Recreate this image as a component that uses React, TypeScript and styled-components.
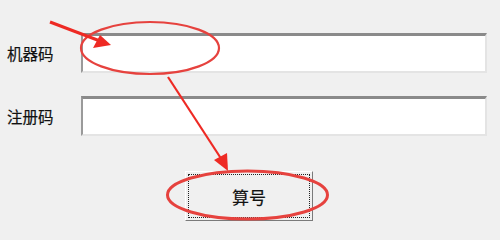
import React from "react";
import styled, { createGlobalStyle } from "styled-components";

const GlobalStyle = createGlobalStyle`
  html, body {
    margin: 0;
    padding: 0;
    background: #f0f0f0;
  }
`;

const Page = styled.div`
  position: relative;
  width: 500px;
  height: 223px;
  overflow: hidden;
  background: #f0f0f0;
  font-family: "Noto Sans CJK SC", "Liberation Sans", sans-serif;
`;

const Form = styled.div`
  display: flex;
  flex-direction: column;
  padding: 33px 0 0 7px;
  gap: 23px;
`;

const Row = styled.div`
  display: flex;
  align-items: center;
`;

const Label = styled.span`
  width: 74px;
  font-size: 15.5px;
  color: #111;
  -webkit-text-stroke: 0.2px #111;
`;

const Field = styled.div`
  box-sizing: border-box;
  width: 406px;
  height: 40px;
  background: #fff;
  border-top: 3px solid #8a8a8a;
  border-left: 2px solid #9a9a9a;
  border-right: 2px solid #e4e4e4;
  border-bottom: 2px solid #e4e4e4;
`;

const ButtonRow = styled.div`
  display: flex;
  padding-left: 185px;
  margin-top: 35px;
`;

const Button = styled.div`
  box-sizing: border-box;
  width: 128px;
  height: 50px;
  display: flex;
  align-items: center;
  justify-content: center;
  background: #f0f0f0;
  border: 1px solid #fff;
  border-right-color: #7a7a7a;
  border-bottom-color: #7a7a7a;
  padding: 2px;
`;

const Focus = styled.div`
  box-sizing: border-box;
  width: 100%;
  height: 100%;
  border: 1px dotted #222;
  display: flex;
  align-items: center;
  justify-content: center;
  font-size: 17px;
  color: #111;
  -webkit-text-stroke: 0.2px #111;
`;

const Marks = styled.svg`
  position: absolute;
  left: 0;
  top: 0;
  pointer-events: none;
`;

export default function App() {
  return (
    <Page>
      <GlobalStyle />
      <Form>
        <Row>
          <Label>机器码</Label>
          <Field />
        </Row>
        <Row>
          <Label>注册码</Label>
          <Field />
        </Row>
      </Form>
      <ButtonRow>
        <Button>
          <Focus>算号</Focus>
        </Button>
      </ButtonRow>
      <Marks width="500" height="223" viewBox="0 0 500 223">
        <g fill="none" stroke="#e6423e" strokeWidth="2.2">
          <ellipse cx="150" cy="48" rx="69" ry="26" />
          <ellipse cx="247.5" cy="195" rx="80" ry="24" strokeWidth="3" />
        </g>
        <line x1="50" y1="22" x2="100" y2="41" stroke="#ee2a24" strokeWidth="3" />
        <polygon points="111,45 93,48 100,35" fill="#ee2a24" />
        <line x1="168" y1="77" x2="222" y2="160" stroke="#ee2a24" strokeWidth="2.2" />
        <polygon points="228,171 214,160 227,153" fill="#ee2a24" />
      </Marks>
    </Page>
  );
}
